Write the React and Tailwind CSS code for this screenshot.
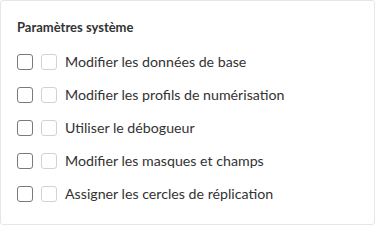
const droits = [
  'Modifier les données de base',
  'Modifier les profils de numérisation',
  'Utiliser le débogueur',
  'Modifier les masques et champs',
  'Assigner les cercles de réplication',
];

export default function App() {
  return (
    <div className="w-[376px] h-[226px] bg-white" style={{ fontFamily: 'Lato, "Open Sans", sans-serif' }}>
      <div className="w-[375px] h-[225px] border border-[#e6e6e6] rounded-[3px] pl-4 pt-[17px]">
        <h2 className="text-[13px] font-bold text-[#333] leading-[18px]">Paramètres système</h2>
        <ul className="mt-[18px] flex flex-col gap-[17px]">
          {droits.map((droit) => (
            <li key={droit} className="flex items-center h-4">
              <span className="w-4 h-4 border border-[#7a7a7a] rounded-[3px]" />
              <span className="ml-2 w-4 h-4 border border-[#d2d2d2] rounded-[3px]" />
              <span className="ml-2 text-[14.2px] text-[#333] whitespace-nowrap">{droit}</span>
            </li>
          ))}
        </ul>
      </div>
    </div>
  );
}
